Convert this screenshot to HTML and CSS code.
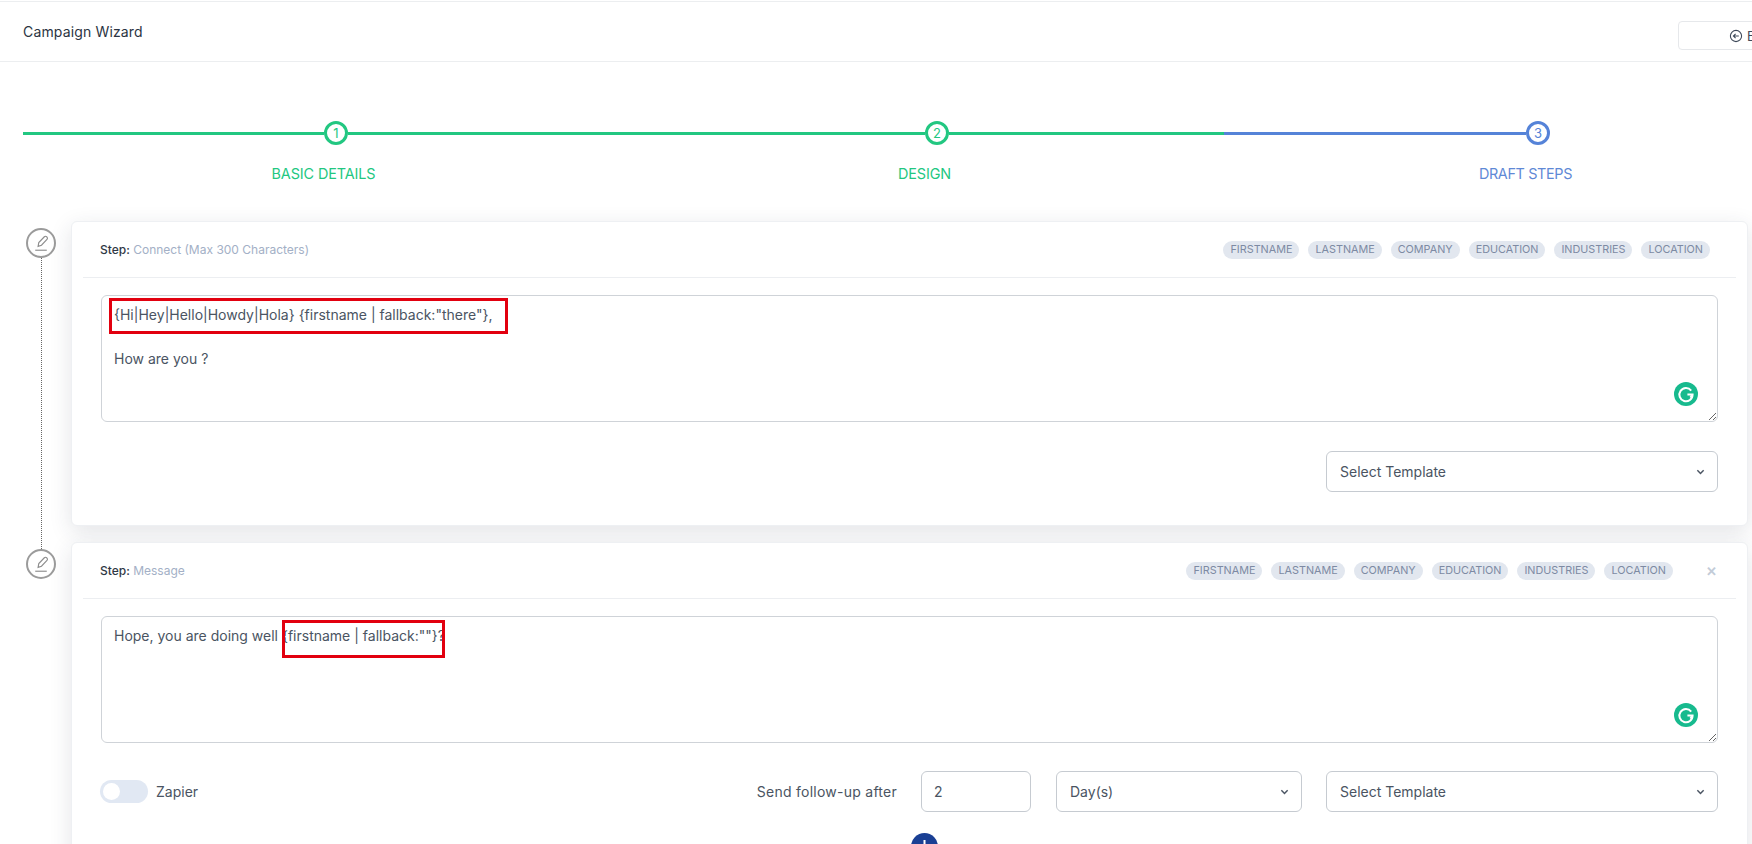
FILE: index.html
```html
<!DOCTYPE html>
<html lang="en">
<head>
<meta charset="utf-8">
<title>Campaign Wizard</title>
<link rel="stylesheet" href="styles.css">
</head>
<body>
<div class="page">
  <header class="topbar">
    <h1 class="title">Campaign Wizard</h1>
    <button class="back" type="button">
      <svg class="back-icon" viewBox="0 0 14 14"><circle cx="7" cy="7" r="5.6"/><path d="M9.8 7H4.4M6.6 4.8 4.4 7l2.2 2.2"/></svg>
      <span>Back</span>
    </button>
  </header>

  <section class="stepper">
    <div class="track">
      <span class="seg green s1"></span>
      <span class="dot green">1</span>
      <span class="seg green s2"></span>
      <span class="dot green">2</span>
      <span class="seg green s3"></span>
      <span class="seg blue s4"></span>
      <span class="dot blue">3</span>
    </div>
    <div class="labels">
      <span class="label text-green">BASIC DETAILS</span>
      <span class="label text-green">DESIGN</span>
      <span class="label text-blue">DRAFT STEPS</span>
    </div>
  </section>

  <section class="timeline">
    <div class="entry first">
      <div class="rail">
        <span class="node"><svg viewBox="0 0 27 27"><path d="M10.5 17 11.2 13 17 7a1.6 1.6 0 0 1 2.3 0l.4.4a1.6 1.6 0 0 1 0 2.3L14 15.8Z"/><path d="M7.5 21h12"/></svg></span>
        <span class="dots"></span>
      </div>
      <article class="card">
        <div class="card-head">
          <p class="step"><b>Step:</b> <span>Connect (Max 300 Characters)</span></p>
          <div class="chips">
            <span class="chip">FIRSTNAME</span><span class="chip">LASTNAME</span><span class="chip">COMPANY</span><span class="chip">EDUCATION</span><span class="chip">INDUSTRIES</span><span class="chip">LOCATION</span>
          </div>
        </div>
        <div class="editor">
          <textarea class="area" spellcheck="false">{Hi|Hey|Hello|Howdy|Hola} {firstname | fallback:"there"},

How are you ?</textarea>
          <span class="mark mark-a"></span>
          <svg class="grammarly" viewBox="0 0 24 24"><circle cx="12" cy="12" r="12"/><path d="M17.2 8.6A6.6 6.6 0 1 0 18.6 12.6H13.4M18.6 12.6 16.4 15.6"/></svg>
        </div>
        <div class="row-end">
          <div class="select wide"><span>Select Template</span><svg viewBox="0 0 10 6"><path d="M1.5 1 5 4.6 8.5 1"/></svg></div>
        </div>
      </article>
    </div>

    <div class="entry">
      <div class="rail">
        <span class="node"><svg viewBox="0 0 27 27"><path d="M10.5 17 11.2 13 17 7a1.6 1.6 0 0 1 2.3 0l.4.4a1.6 1.6 0 0 1 0 2.3L14 15.8Z"/><path d="M7.5 21h12"/></svg></span>
      </div>
      <article class="card">
        <div class="card-head">
          <p class="step"><b>Step:</b> <span>Message</span></p>
          <div class="chips">
            <span class="chip">FIRSTNAME</span><span class="chip">LASTNAME</span><span class="chip">COMPANY</span><span class="chip">EDUCATION</span><span class="chip">INDUSTRIES</span><span class="chip">LOCATION</span>
            <span class="close">✕</span>
          </div>
        </div>
        <div class="editor">
          <textarea class="area" spellcheck="false">Hope, you are doing well {firstname | fallback:""}?</textarea>
          <span class="mark mark-b"></span>
          <svg class="grammarly" viewBox="0 0 24 24"><circle cx="12" cy="12" r="12"/><path d="M17.2 8.6A6.6 6.6 0 1 0 18.6 12.6H13.4M18.6 12.6 16.4 15.6"/></svg>
        </div>
        <div class="row-follow">
          <span class="toggle"><span class="knob"></span></span>
          <span class="zapier">Zapier</span>
          <span class="follow-label">Send follow-up after</span>
          <div class="input">2</div>
          <div class="select days"><span>Day(s)</span><svg viewBox="0 0 10 6"><path d="M1.5 1 5 4.6 8.5 1"/></svg></div>
          <div class="select wide"><span>Select Template</span><svg viewBox="0 0 10 6"><path d="M1.5 1 5 4.6 8.5 1"/></svg></div>
        </div>
        <div class="add">
          <svg viewBox="0 0 27 27"><circle cx="13.5" cy="13.5" r="13.5"/><path d="M13.5 7v13M7 13.5h13"/></svg>
        </div>
      </article>
    </div>
  </section>
</div>
</body>
</html>
```
FILE: styles.css
```css
* { box-sizing: border-box; }
html, body { margin: 0; padding: 0; background: #fff; }
body { font-family: Inter, "Noto Sans", "Liberation Sans", sans-serif; color: #3f4a5a; }
.page { width: 1752px; height: 844px; overflow: hidden; }

.topbar {
  height: 61px; margin-top: 1px;
  border-top: 1px solid #eceef0; border-bottom: 1px solid #eceef0;
  display: grid; grid-template-columns: 1fr 74px; align-items: start;
  padding-left: 23px;
}
.title { margin: 21px 0 0; font-size: 14px; line-height: 18px; font-weight: 400; color: #2b3442; letter-spacing: .15px; }
.back {
  width: 120px; height: 29px; margin-top: 19px; padding: 0 0 0 50px;
  display: flex; align-items: center; gap: 4px;
  background: #fff; border: 1px solid #e6e8eb; border-radius: 4px;
  font: 400 13px Inter, sans-serif; color: #3f4a5a;
}
.back-icon { width: 14px; height: 14px; flex: none; fill: none; stroke: #3f4a5a; stroke-width: 1.1; }

.stepper { padding-top: 59px; }
.track { display: flex; align-items: center; padding-left: 23px; height: 24px; }
.seg { display: block; height: 3px; flex: none; }
.seg.green { background: #22c781; }
.seg.blue { background: #5583d8; }
.s1 { width: 301px; } .s2 { width: 577px; } .s3 { width: 275px; } .s4 { width: 302px; }
.dot {
  flex: none; width: 24px; height: 24px; border-radius: 50%;
  border: 3px solid; background: #fff;
  display: flex; align-items: center; justify-content: center;
  font-size: 13px; line-height: 1;
}
.dot.green { border-color: #22c781; color: #22c781; }
.dot.blue { border-color: #5583d8; color: #5583d8; }
.labels { display: grid; grid-template-columns: repeat(3, 601px); margin: 20px 0 0 23px; }
.label { text-align: center; font-size: 14.4px; line-height: 18px; letter-spacing: -.1px; }
.text-green { color: #22c781; }
.text-blue { color: #5f89d6; letter-spacing: -.35px; }

.timeline { margin-top: 38px; display: flex; flex-direction: column; gap: 16px; }
.entry { display: flex; align-items: stretch; padding-right: 4px; }
.entry.first { height: 305px; }
.rail { flex: none; width: 71px; padding: 7px 0 0 26px; display: flex; flex-direction: column; }
.node {
  flex: none; width: 30px; height: 30px; border-radius: 50%;
  border: 2px solid #9b9b9b; display: block; background: #fff;
}
.node svg { display: block; width: 26px; height: 26px; fill: none; stroke: #8d8d8d; stroke-width: 1.2; }
.dots { flex: 1; width: 0; margin: 0 0 -25px 14.5px; border-left: 1px dotted #666; }

.card {
  flex: 1; min-width: 0; background: #fff; border-radius: 6px;
  border: 1px solid #eef0f3; padding: 0 11px;
  box-shadow: 0 6px 22px rgba(40, 50, 70, .13);
}
.card-head {
  height: 56px; display: flex; align-items: center; justify-content: space-between;
  border-bottom: 1px solid #eceef1; padding: 0 26px 0 17px;
}
.step { margin: 0; font-size: 12px; color: #a3b0c6; }
.step b { font-weight: 500; color: #2f3845; }
.chips { display: flex; align-items: center; gap: 9px; }
.chip {
  height: 18px; padding: 0 7px; border-radius: 9px; background: #e2e7ef;
  font-size: 10.8px; line-height: 18px; color: #7d8aa3; white-space: nowrap;
}
.close { width: 12px; margin-left: 23px; margin-right: -7px; font-size: 13px; font-weight: 700; color: #c3ccd8; text-align: center; }

.editor { position: relative; margin: 17px 18px 0; height: 127px; }
.area {
  display: block; width: 100%; height: 127px; padding: 8px 12px;
  font: 400 14px/22px Inter, sans-serif; color: #4a5462;
  border: 1px solid #cfd3d8; border-radius: 6px; background: #fff; outline: none;
  resize: vertical; overflow: hidden;
}
.mark { position: absolute; border: 3px solid #e2000f; pointer-events: none; }
.mark-a { left: 8px; top: 3px; width: 399px; height: 36px; }
.mark-b { left: 181px; top: 4px; width: 163px; height: 38px; }
.grammarly { position: absolute; right: 20px; bottom: 16px; width: 24px; height: 24px; }
.grammarly circle { fill: #17ba8e; }
.grammarly path { fill: none; stroke: #fff; stroke-width: 2; }

.row-end { display: flex; justify-content: flex-end; margin: 29px 18px 0; }
.select {
  height: 41px; display: flex; align-items: center; justify-content: space-between;
  padding: 0 12px 0 13px; border: 1px solid #c6cbd1; border-radius: 6px; background: #fff;
  font-size: 14px; color: #4a5462;
}
.select svg { width: 9px; height: 6px; fill: none; stroke: #4a5462; stroke-width: 1.6; }
.wide { width: 392px; }
.days { width: 246px; }
.input {
  width: 110px; height: 41px; display: flex; align-items: center; padding-left: 12px;
  border: 1px solid #c6cbd1; border-radius: 6px; font-size: 14px; color: #4a5462;
}
.row-follow { display: flex; align-items: center; margin: 28px 18px 0; height: 41px; }
.toggle { width: 48px; height: 23px; margin-left: -1px; border-radius: 12px; background: #e1e8f3; padding: 3px; display: block; flex: none; }
.knob { display: block; width: 17px; height: 17px; border-radius: 50%; background: #fff; }
.zapier { margin-left: 8px; font-size: 14px; color: #4a5462; }
.follow-label { margin-left: auto; margin-right: 24px; font-size: 14px; letter-spacing: .25px; color: #4a5462; }
.row-follow .days { margin: 0 24px 0 25px; }
.add { margin: 21px 0 0 828px; height: 27px; }
.add svg { display: block; width: 27px; height: 27px; }
.add circle { fill: #1a3f94; }
.add path { stroke: #fff; stroke-width: 2; }
```
